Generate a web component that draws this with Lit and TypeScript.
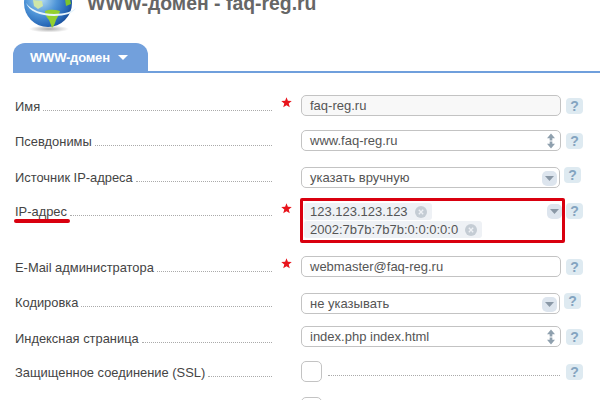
import { LitElement, html, css, svg } from "lit";
import { customElement } from "lit/decorators.js";

type Row = { label: string; req?: boolean; kind: "input" | "spin" | "select" | "ip" | "check"; value?: string; disabled?: boolean; h: number; lo: number };

const rows: Row[] = [
  { label: "Имя", req: true, kind: "input", value: "faq-reg.ru", disabled: true, h: 35, lo: 10 },
  { label: "Псевдонимы", kind: "spin", value: "www.faq-reg.ru", h: 37, lo: 10 },
  { label: "Источник IP-адреса", kind: "select", value: "указать вручную", h: 36, lo: 9 },
  { label: "IP-адрес", req: true, kind: "ip", h: 53, lo: 7 },
  { label: "E-Mail администратора", req: true, kind: "input", value: "webmaster@faq-reg.ru", h: 37, lo: 10 },
  { label: "Кодировка", kind: "select", value: "не указывать", h: 33, lo: 8 },
  { label: "Индексная страница", kind: "spin", value: "index.php index.html", h: 35, lo: 11 },
  { label: "Защищенное соединение (SSL)", kind: "check", h: 36, lo: 10 },
  { label: "", kind: "check", h: 36, lo: 10 },
];

const star = html`<svg class="star" viewBox="0 0 12 12" width="11" height="11"><polygon fill="#e8141c" points="6,0.3 7.5,4.2 11.7,4.4 8.4,7 9.6,11.3 6,8.9 2.4,11.3 3.6,7 .3,4.4 4.5,4.2"/></svg>`;

const globe = svg`
  <defs>
    <radialGradient id="sea" cx="0.36" cy="0.42" r="0.72">
      <stop offset="0" stop-color="#b5dcf4"/><stop offset="0.45" stop-color="#4f95d8"/><stop offset="0.8" stop-color="#2464b4"/><stop offset="1" stop-color="#123f86"/>
    </radialGradient>
    <radialGradient id="sh" cx="0.5" cy="0.5" r="0.5">
      <stop offset="0" stop-color="#555" stop-opacity=".5"/><stop offset="1" stop-color="#555" stop-opacity="0"/>
    </radialGradient>
  </defs>
  <ellipse cx="25" cy="45" rx="20" ry="3.500" fill="url(#sh)"/>
  <circle cx="24" cy="19" r="24" fill="url(#sea)"/>
  <path d="M9 16l9 1 1 5-5 3-4-3z" fill="#cfe6a8"/>
  <path d="M21 27c5-2 10-1 15 0-1 4-3 7-4 9-1 3-2 6-4 8-1-3-2-6-3-8-2-2-4-5-4-9z" fill="#93d030"/>
  <path d="M41 15h5l1 5-5 2z" fill="#7cc42a"/>
  <path d="M2 19c3 8 14 13 28 13 11 0 20-3 22-8-3 3-11 6-22 6C18 30 7 26 2 19z" fill="#e6f4fb"/>
`;

const updown = html`<svg class="spinicon" viewBox="0 0 10 18" width="10" height="16"><path fill="#8fa0ae" d="M5 0.5 9.500 6H6.500v2.500h-3V6H.5z"/><path fill="#8fa0ae" d="M5 17.500 9.500 12H6.500V9.500h-3V12H.5z"/></svg>`;
const caret = html`<div class="dd"><svg viewBox="0 0 9 5" width="9" height="5"><path fill="#8a98a6" d="M0 0h9L4.500 5z"/></svg></div>`;
const x = html`<svg class="x" viewBox="0 0 12 12" width="12" height="12"><circle cx="6" cy="6" r="6" fill="#c4ccd4"/><path d="M3.800 3.800l4.400 4.400M8.200 3.800 3.800 8.200" stroke="#eef1f5" stroke-width="1.300"/></svg>`;

@customElement("app-root")
export class AppRoot extends LitElement {
  static styles = css`
    :host { display: block; width: 600px; height: 400px; overflow: hidden; background: #fff; font-family: "Liberation Sans", Arial, sans-serif; color: #444; }
    .head { display: flex; height: 43px; padding-left: 24px; gap: 9px; align-items: flex-start; }
    .globe { margin-top: -16px; flex: none; }
    .title { font-size: 19.4px; font-weight: bold; color: #666; line-height: 20px; margin-top: -7px; white-space: nowrap; }
    .tabs { margin-left: 13px; border-bottom: 2px solid #6f9fdc; height: 28px; }
    .tab { width: 135px; height: 30px; box-sizing: border-box; padding-left: 17px; background: #72a0dc; border-radius: 12px 12px 0 0; color: #fff; font-size: 13px; font-weight: bold; display: flex; align-items: center; gap: 8px; padding-bottom: 2px; letter-spacing: -0.2px; }
    .form { padding-top: 14px; }
    .row { display: flex; padding-left: 15px; align-items: flex-start; }
    .lab { width: 257px; flex: none; display: flex; align-items: flex-end; height: 17px; font-size: 12.9px; line-height: 15px; position: relative; gap: 3px; }
    .lab span { white-space: nowrap; }
    .lab i { flex: 1; border-bottom: 1px dotted #aaa; margin-bottom: 3px; min-width: 0; }
    .mark { position: absolute; left: -1px; top: 17px; width: 56px; height: 3.5px; border-radius: 2px; background: #d9000f; }
    .req { width: 29px; flex: none; padding: 10px 0 0 9px; box-sizing: border-box; height: 20px; }
    .ip .req { padding-top: 8px; }
    .star { display: block; }
    .f { box-sizing: border-box; height: 21px; margin-top: 8px; border: 1px solid #c3c3c3; border-radius: 5px; background: #fff; font-size: 13px; color: #555; display: flex; align-items: center; padding: 0 4px 0 8px; }
    .w260 { width: 260px; }
    .w259 { width: 259px; }
    .disabled { background: #f8f8f8; }
    .f span { flex: 1; }
    .help { flex: none; width: 17px; height: 16px; margin: 11px 0 0 5px; border-radius: 4px; background: #deeaf1; color: #84a4c0; font-size: 14px; font-weight: bold; display: flex; align-items: center; justify-content: center; }
    .help.sel { margin: 8px 0 0 4px; }
    .help.ipq { margin: 8px 0 0 1px; }
    .dd { flex: none; width: 15px; height: 15px; border-radius: 5px; background: #dde5ee; display: flex; align-items: center; justify-content: center; margin-right: -2px; margin-top: 1px; }
    .box { box-sizing: border-box; width: 265px; height: 45px; margin: 3px 0 0 -1px; border: 3px solid #d9000f; border-radius: 2px; padding: 2px 2px 0 1px; display: flex; align-items: flex-start; font-size: 13px; color: #555; }
    .chips { flex: 1; display: flex; flex-direction: column; align-items: flex-start; gap: 1px; }
    .chip { display: flex; align-items: center; gap: 7px; height: 17px; background: #eef1f5; border-radius: 3px; padding: 0 5px 0 6px; white-space: nowrap; }
    .check { display: flex; flex: none; width: 260px; gap: 6px; margin-top: 8px; align-items: flex-end; height: 21px; }
    .cb { box-sizing: border-box; width: 21px; height: 21px; border: 1px solid #c3c3c3; border-radius: 5px; flex: none; }
    .lead { flex: 1; border-bottom: 1px dotted #aaa; margin-bottom: 6px; margin-right: 1px; }
  `;

  field(r: Row) {
    switch (r.kind) {
      case "input":
        return html`<div class="f w260 ${r.disabled ? "disabled" : ""}"><span>${r.value}</span></div><div class="help">?</div>`;
      case "spin":
        return html`<div class="f w260"><span>${r.value}</span>${updown}</div><div class="help">?</div>`;
      case "select":
        return html`<div class="f w259"><span>${r.value}</span>${caret}</div><div class="help sel">?</div>`;
      case "ip":
        return html`<div class="box"><div class="chips">
            <div class="chip">123.123.123.123 ${x}</div>
            <div class="chip">2002:7b7b:7b7b:0:0:0:0:0 ${x}</div>
          </div>${caret}</div><div class="help ipq">?</div>`;
      case "check":
        return html`<div class="check"><div class="cb"></div><div class="lead"></div></div><div class="help">?</div>`;
    }
  }

  render() {
    return html`
      <div class="head">
        <svg class="globe" viewBox="0 0 54 52" width="54" height="52" aria-hidden="true">${globe}</svg>
        <div class="title">WWW-домен - faq-reg.ru</div>
      </div>
      <div class="tabs">
        <div class="tab">WWW-домен <svg viewBox="0 0 10 5" width="10" height="5"><path fill="#fff" d="M0 0h10L5 5z"/></svg></div>
      </div>
      <div class="form">
        ${rows.map(
          (r) => html`<div class="row ${r.kind === "ip" ? "ip" : ""}" style="height:${r.h}px">
            <div class="lab" style="margin-top:${r.lo}px"><span>${r.label}</span>${r.label ? html`<i></i>` : ""}${r.kind === "ip" ? html`<b class="mark"></b>` : ""}</div>
            <div class="req">${r.req ? star : ""}</div>
            ${this.field(r)}
          </div>`
        )}
      </div>
    `;
  }
}
